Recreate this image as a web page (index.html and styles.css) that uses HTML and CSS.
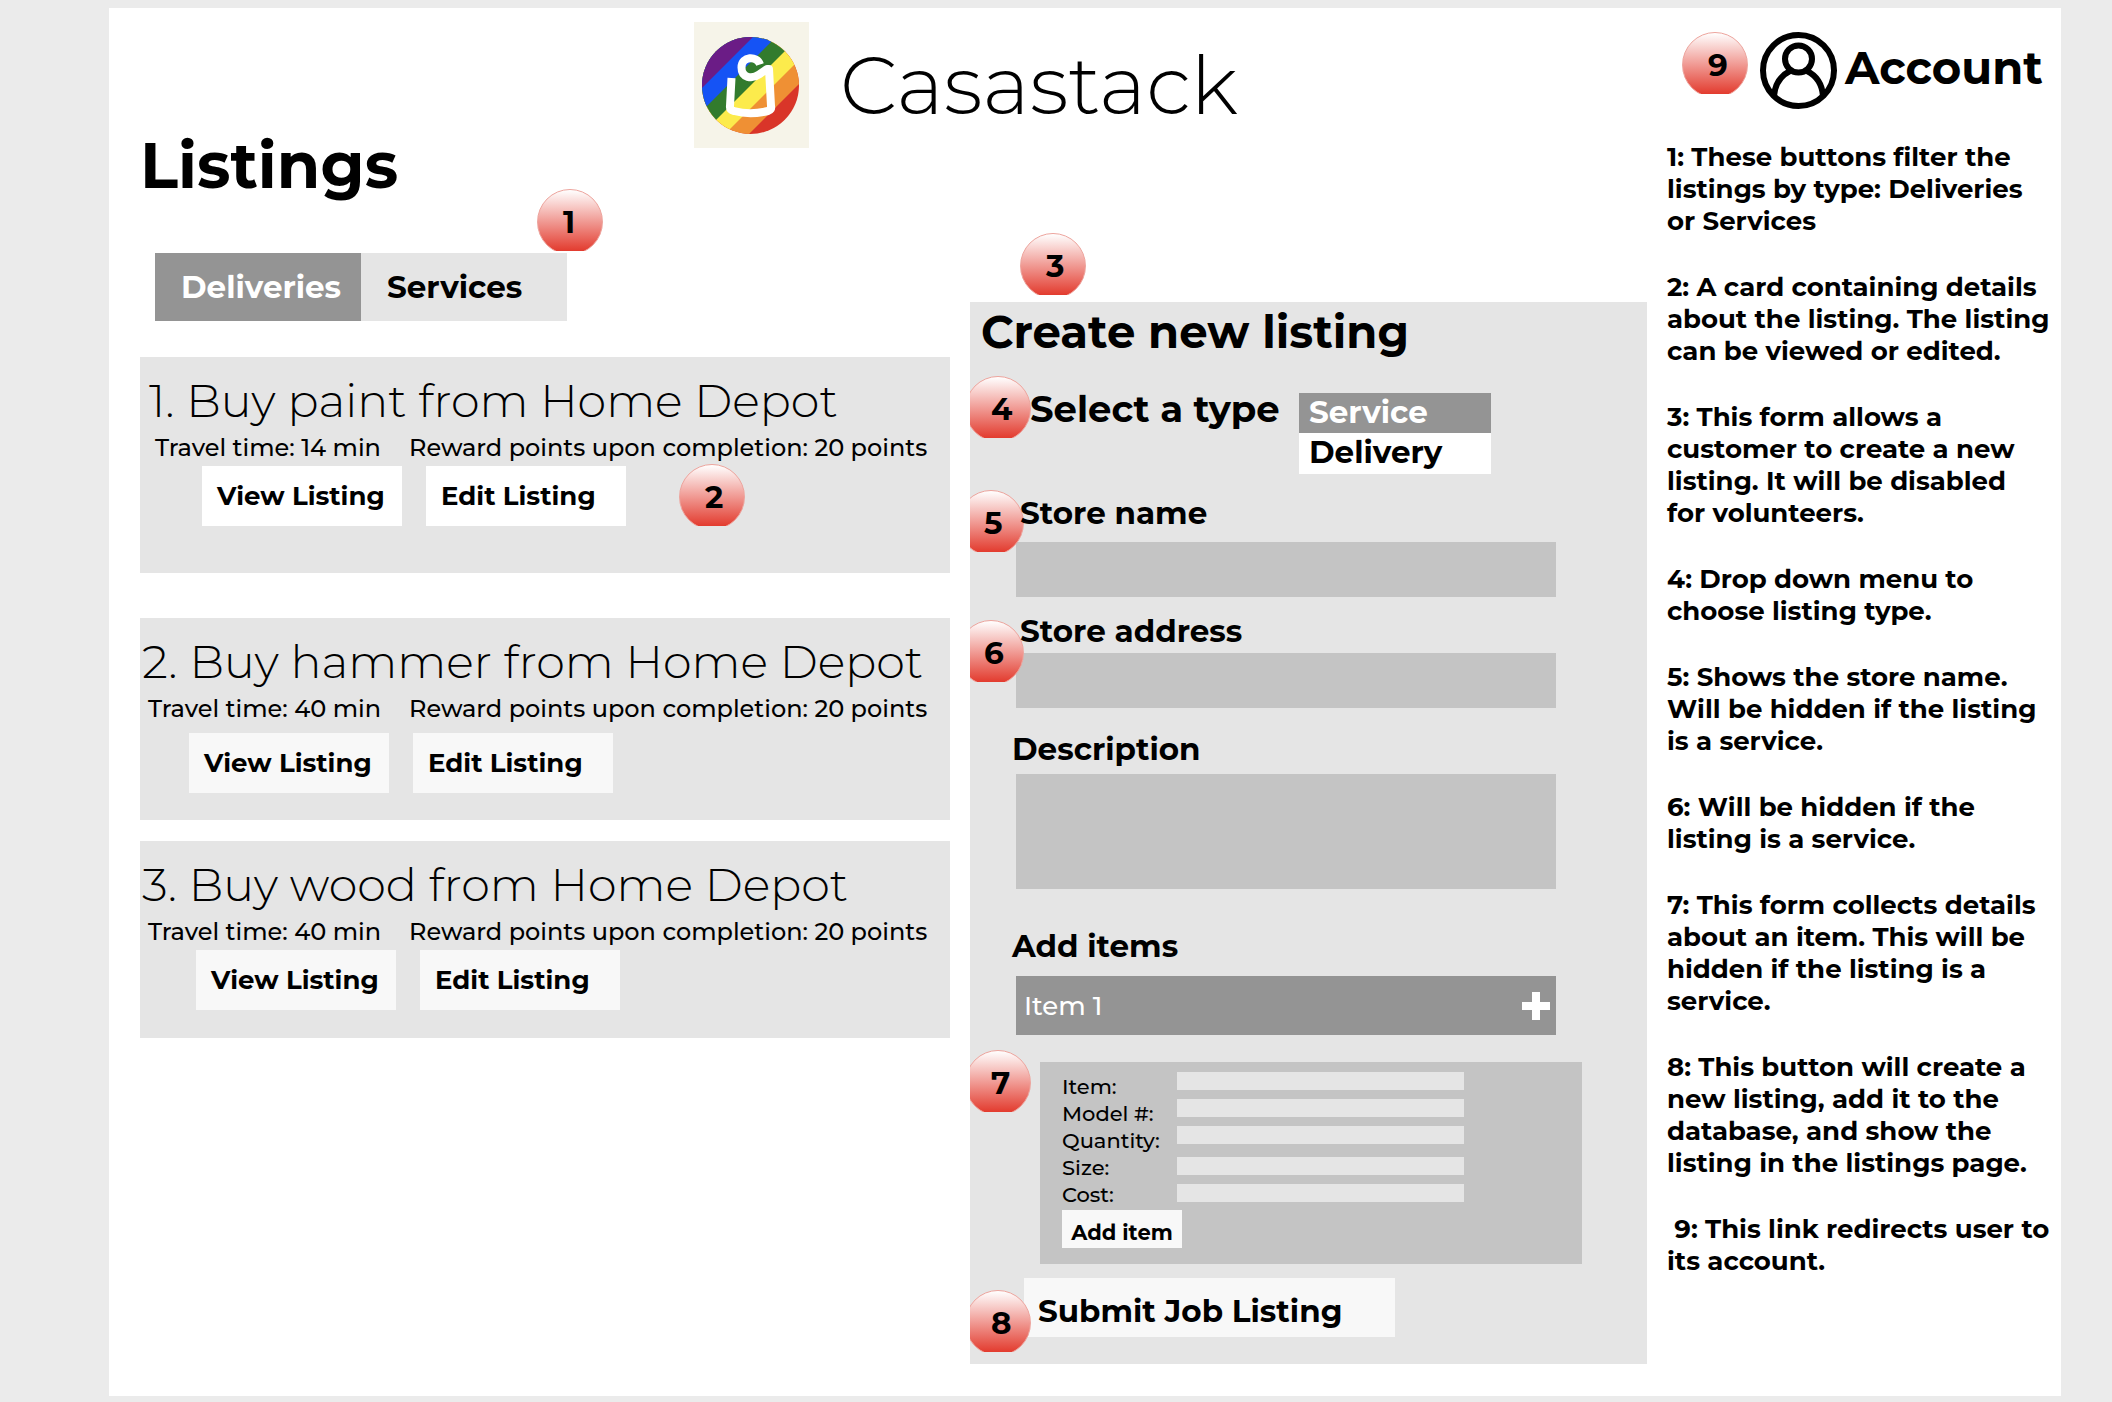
FILE: index.html
```html
<!DOCTYPE html>
<html lang="en">
<head>
<meta charset="utf-8">
<title>Casastack – Listings</title>
<link rel="stylesheet" href="styles.css">
</head>
<body>
<div class="board">
  <header class="brand">
    <svg class="logo" viewBox="0 0 115 126" role="img" aria-label="Casastack logo">
      <defs><clipPath id="disc"><circle cx="56.5" cy="63.5" r="48.5"/></clipPath></defs>
      <rect width="115" height="126" fill="#f6f4e9"/>
      <g clip-path="url(#disc)">
        <rect width="115" height="126" fill="#d93529"/>
        <path d="M0 0H167L0 167Z" fill="#ef9034"/>
        <path d="M0 0H143L0 143Z" fill="#fceb4c"/>
        <path d="M0 0H120L0 120Z" fill="#327b2d"/>
        <path d="M0 0H97L0 97Z" fill="#1553f5"/>
        <path d="M0 0H74L0 74Z" fill="#6b1c86"/>
      </g>
      <path d="M66 42.500C63 33.500 47.500 34 47.500 45.500C47.500 56 58 57.500 65 52.500L73 47H75L77 84Q78 88 74 89Q56 93.500 40 89Q35.500 88 36 84L37.500 56" fill="none" stroke="#fff" stroke-width="8" stroke-linejoin="round"/>
    </svg>
    <h1 class="brand-name">Casastack</h1>
  </header>

  <main class="listings">
    <h2 class="listings-title">Listings</h2>
    <div class="tabs">
      <button class="tab tab-active" type="button">Deliveries</button>
      <button class="tab" type="button">Services</button>
      <span class="badge badge-tabs">1</span>
    </div>

    <article class="card card-first">
      <h3 class="card-title">1. Buy paint from Home Depot</h3>
      <div class="card-meta"><span>Travel time: 14 min</span><span>Reward points upon completion: 20 points</span></div>
      <div class="card-actions">
        <button class="btn" type="button">View Listing</button>
        <button class="btn" type="button">Edit Listing</button>
      </div>
      <span class="badge badge-card">2</span>
    </article>
    <article class="card card-second">
      <h3 class="card-title">2. Buy hammer from Home Depot</h3>
      <div class="card-meta"><span>Travel time: 40 min</span><span>Reward points upon completion: 20 points</span></div>
      <div class="card-actions">
        <button class="btn" type="button">View Listing</button>
        <button class="btn" type="button">Edit Listing</button>
      </div>
    </article>
    <article class="card card-third">
      <h3 class="card-title">3. Buy wood from Home Depot</h3>
      <div class="card-meta"><span>Travel time: 40 min</span><span>Reward points upon completion: 20 points</span></div>
      <div class="card-actions">
        <button class="btn" type="button">View Listing</button>
        <button class="btn" type="button">Edit Listing</button>
      </div>
    </article>
  </main>

  <section class="create">
    <span class="badge badge-create">3</span>
    <form class="form">
      <h2 class="form-title">Create new listing</h2>

      <div class="type-row">
        <span class="badge badge-type">4</span>
        <label class="type-label" for="type">Select a type</label>
        <select class="type-select" id="type" size="2">
          <option selected>Service</option>
          <option>Delivery</option>
        </select>
      </div>

      <div class="field field-name">
        <span class="badge badge-name">5</span>
        <label class="label label-store" for="store-name">Store name</label>
        <input class="input" id="store-name" type="text">
      </div>

      <div class="field field-address">
        <span class="badge badge-address">6</span>
        <label class="label label-store" for="store-address">Store address</label>
        <input class="input" id="store-address" type="text">
      </div>

      <div class="field field-description">
        <label class="label" for="description">Description</label>
        <textarea class="input input-tall" id="description"></textarea>
      </div>

      <div class="items">
        <h3 class="label">Add items</h3>
        <button class="item-bar" type="button">
          <span>Item 1</span>
          <svg class="plus" viewBox="0 0 28 28" aria-hidden="true"><path d="M10 0h8v10h10v8H18v10h-8V18H0v-8h10z" fill="#fff"/></svg>
        </button>
      </div>

      <div class="item-panel-wrap">
        <span class="badge badge-item">7</span>
        <div class="item-panel">
          <div class="item-grid">
            <div class="item-labels">
              <label for="item">Item:</label>
              <label for="model">Model #:</label>
              <label for="quantity">Quantity:</label>
              <label for="size">Size:</label>
              <label for="cost">Cost:</label>
            </div>
            <div class="item-inputs">
              <div class="item-group">
                <input class="item-input" id="item" type="text">
                <input class="item-input" id="model" type="text">
                <input class="item-input" id="quantity" type="text">
              </div>
              <div class="item-group">
                <input class="item-input" id="size" type="text">
                <input class="item-input" id="cost" type="text">
              </div>
            </div>
          </div>
          <button class="add-item" type="button">Add item</button>
        </div>
      </div>

      <div class="submit-row">
        <button class="submit" type="submit">Submit Job Listing</button>
        <span class="badge badge-submit">8</span>
      </div>
    </form>
  </section>

  <aside class="side">
    <div class="account-row">
      <span class="badge">9</span>
      <a class="account" href="#account">
        <svg class="account-icon" viewBox="0 0 77 77" fill="none" stroke="#000" stroke-width="6" aria-hidden="true">
          <circle cx="38.500" cy="38.500" r="35.500"/>
          <circle cx="38.500" cy="27" r="13.500"/>
          <path d="M14 64C15 51 22 43 30 39M63 64C62 51 55 43 47 39"/>
        </svg>
        Account
      </a>
    </div>
    <div class="notes">
      <p>1: These buttons filter the<br>listings by type: Deliveries<br>or Services</p>
      <p>2: A card containing details<br>about the listing. The listing<br>can be viewed or edited.</p>
      <p>3: This form allows a<br>customer to create a new<br>listing. It will be disabled<br>for volunteers.</p>
      <p>4: Drop down menu to<br>choose listing type.</p>
      <p>5: Shows the store name.<br>Will be hidden if the listing<br>is a service.</p>
      <p>6: Will be hidden if the<br>listing is a service.</p>
      <p>7: This form collects details<br>about an item. This will be<br>hidden if the listing is a<br>service.</p>
      <p>8: This button will create a<br>new listing, add it to the<br>database, and show the<br>listing in the listings page.</p>
      <p>&nbsp;9: This link redirects user to<br>its account.</p>
    </div>
  </aside>
</div>
</body>
</html>
```
FILE: styles.css
```css
* {
  box-sizing: border-box;
}

body {
  margin: 0;
  padding: 8px 51px 6px 109px;
  background: #ebebeb;
  color: #000;
  font-family: Montserrat, Inter, sans-serif;
}

h1, h2, h3, p {
  margin: 0;
}

button, input, select, textarea {
  border: 0;
  border-radius: 0;
  padding: 0;
  color: inherit;
  font-family: inherit;
}

.board {
  display: grid;
  grid-template-columns: minmax(0, 810fr) minmax(0, 677fr) minmax(0, 394fr);
  grid-template-rows: 108px auto;
  column-gap: 20px;
  padding: 14px 0 32px 31px;
  background: #fff;
}

/* Brand */

.brand {
  grid-area: 1 / 1 / 3 / 3;
  display: flex;
  align-items: center;
  align-self: start;
  gap: 31px;
  padding-left: 554px;
}

.logo {
  width: 115px;
  height: 126px;
}

.brand-name {
  font-size: 81px;
  font-weight: 300;
  line-height: 96px;
}

/* Numbered markers */

.badge {
  width: 66px;
  height: 66px;
  padding-left: 25px;
  border: 1px solid #eda49d;
  border-radius: 50%;
  background: linear-gradient(#fff, #e2382b 62px);
  clip-path: inset(0 0 4px);
  font-size: 31px;
  font-weight: 700;
  line-height: 64px;
}

.badge-tabs,
.badge-card,
.badge-create,
.badge-type,
.badge-name,
.badge-address,
.badge-item,
.badge-submit {
  position: absolute;
}

.badge-tabs { left: 382px; top: -64px; }
.badge-card { left: 539px; top: 107px; }
.badge-create { left: 50px; top: -69px; }
.badge-type { left: -5px; top: -17px; }
.badge-name { left: -12px; top: -7px; }
.badge-address { left: -12px; top: 5px; }
.badge-item { left: -5px; top: -12px; }
.badge-submit { left: -5px; top: 26px; }

/* Listings */

.listings {
  grid-area: 2 / 1;
}

.listings-title {
  font-size: 63px;
  font-weight: 700;
  line-height: 72px;
}

.tabs {
  position: relative;
  display: flex;
  width: 412px;
  margin: 51px 0 36px 15px;
}

.tab {
  flex: 1;
  height: 68px;
  padding-left: 26px;
  background: #e5e5e5;
  font-size: 31px;
  font-weight: 700;
  text-align: left;
}

.tab-active {
  background: #949494;
  color: #fff;
}

.card {
  position: relative;
  padding-top: 16px;
  background: #e5e5e5;
}

.card-title {
  padding-left: 2px;
  font-size: 46px;
  font-weight: 300;
  line-height: 56px;
}

.card-meta {
  display: grid;
  grid-template-columns: 269px 1fr;
  margin-top: 5px;
  font-size: 24px;
  font-weight: 500;
  line-height: 28px;
  white-space: nowrap;
}

.card-meta span:first-child {
  padding-left: 8px;
}

.card-actions {
  display: flex;
  gap: 24px;
  padding: 4px 0 0 56px;
}

.btn {
  width: 200px;
  height: 60px;
  padding-left: 15px;
  background: #f8f8f8;
  font-size: 26px;
  font-weight: 700;
  text-align: left;
}

.card-first {
  margin-bottom: 45px;
  padding-bottom: 47px;
}

.card-first .card-title { padding-left: 9px; }
.card-first .card-meta span:first-child { padding-left: 15px; }
.card-first .card-actions { padding-left: 62px; }
.card-first .btn { background: #fff; }

.card-second {
  margin-bottom: 21px;
  padding-bottom: 27px;
}

.card-second .card-actions { padding: 10px 0 0 49px; }

.card-third {
  padding-bottom: 28px;
}

/* Create form */

.create {
  grid-area: 2 / 2;
  position: relative;
  margin-top: 172px;
}

.form {
  padding: 2px 0 27px;
  overflow: hidden;
  background: #e5e5e5;
}

.form-title {
  padding-left: 11px;
  font-size: 45px;
  font-weight: 700;
  line-height: 56px;
}

.type-row {
  position: relative;
  display: flex;
  margin-top: 33px;
  padding-left: 60px;
}

.type-label {
  width: 269px;
  font-size: 37px;
  font-weight: 700;
  line-height: 32px;
  white-space: nowrap;
}

.type-select {
  width: 192px;
  height: 81px;
  overflow: hidden;
  background: #fff;
  font-size: 31px;
  outline: 0;
}

.type-select option {
  height: 40px;
  min-height: 40px;
  padding: 0 0 0 10px;
  font-family: Montserrat, Inter, sans-serif;
  font-size: 31px;
  font-weight: 700;
  line-height: 41px;
}

.type-select option:checked {
  background: #949494 linear-gradient(#949494, #949494);
  color: #fff;
}

.field,
.items {
  position: relative;
  padding: 0 91px 0 46px;
}

.field-name { margin-top: 23px; }
.field-address { margin-top: 18px; }
.field-description { margin-top: 25px; }
.items { margin-top: 41px; }

.label {
  position: relative;
  z-index: 1;
  display: block;
  margin-left: -4px;
  font-size: 31px;
  font-weight: 700;
  line-height: 32px;
}

.label-store { margin-left: 4px; }

.input {
  display: block;
  width: 100%;
  height: 55px;
  background: #c4c4c4;
  font-size: 26px;
  resize: none;
}

.field-name .input { margin-top: 13px; }
.field-address .input { margin-top: 6px; }
.field-description .input { margin-top: 9px; }

.input-tall { height: 115px; }

.item-bar {
  display: flex;
  align-items: center;
  justify-content: space-between;
  width: 100%;
  height: 59px;
  margin-top: 14px;
  padding: 0 6px 0 8px;
  background: #949494;
  color: #fff;
  font-size: 26px;
  font-weight: 500;
}

.plus {
  width: 28px;
  height: 28px;
}

.item-panel-wrap {
  position: relative;
  margin-top: 27px;
  padding: 0 65px 0 70px;
}

.item-panel {
  padding: 10px 22px 16px;
  background: #c4c4c4;
}

.item-grid {
  display: flex;
}

.item-labels {
  display: flex;
  flex-direction: column;
  width: 115px;
  padding-top: 1px;
  font-size: 21px;
  font-weight: 500;
  line-height: 27px;
}

.item-inputs {
  display: flex;
  flex-direction: column;
  gap: 13px;
}

.item-group {
  display: flex;
  flex-direction: column;
  gap: 9px;
}

.item-input {
  width: 287px;
  height: 18px;
  background: #e5e5e5;
}

.add-item {
  display: block;
  width: 120px;
  height: 38px;
  margin-top: 2px;
  padding-top: 6px;
  background: #f8f8f8;
  font-size: 21px;
  font-weight: 700;
}

.submit-row {
  position: relative;
  padding: 14px 0 0 54px;
}

.submit {
  display: block;
  width: 371px;
  height: 59px;
  padding: 6px 0 0 14px;
  background: #f8f8f8;
  font-size: 31px;
  font-weight: 700;
  text-align: left;
}

/* Account and notes */

.side {
  grid-area: 1 / 3 / 3 / 4;
}

.account-row {
  display: flex;
  gap: 12px;
  padding: 10px 0 0 15px;
}

.account {
  display: flex;
  gap: 8px;
  color: inherit;
  font-size: 45px;
  font-weight: 700;
  line-height: 72px;
  text-decoration: none;
}

.account-icon {
  width: 77px;
  height: 77px;
}

.notes {
  display: grid;
  gap: 34px;
  margin-top: 32px;
  font-size: 26px;
  font-weight: 700;
  line-height: 32px;
  white-space: nowrap;
}
```
